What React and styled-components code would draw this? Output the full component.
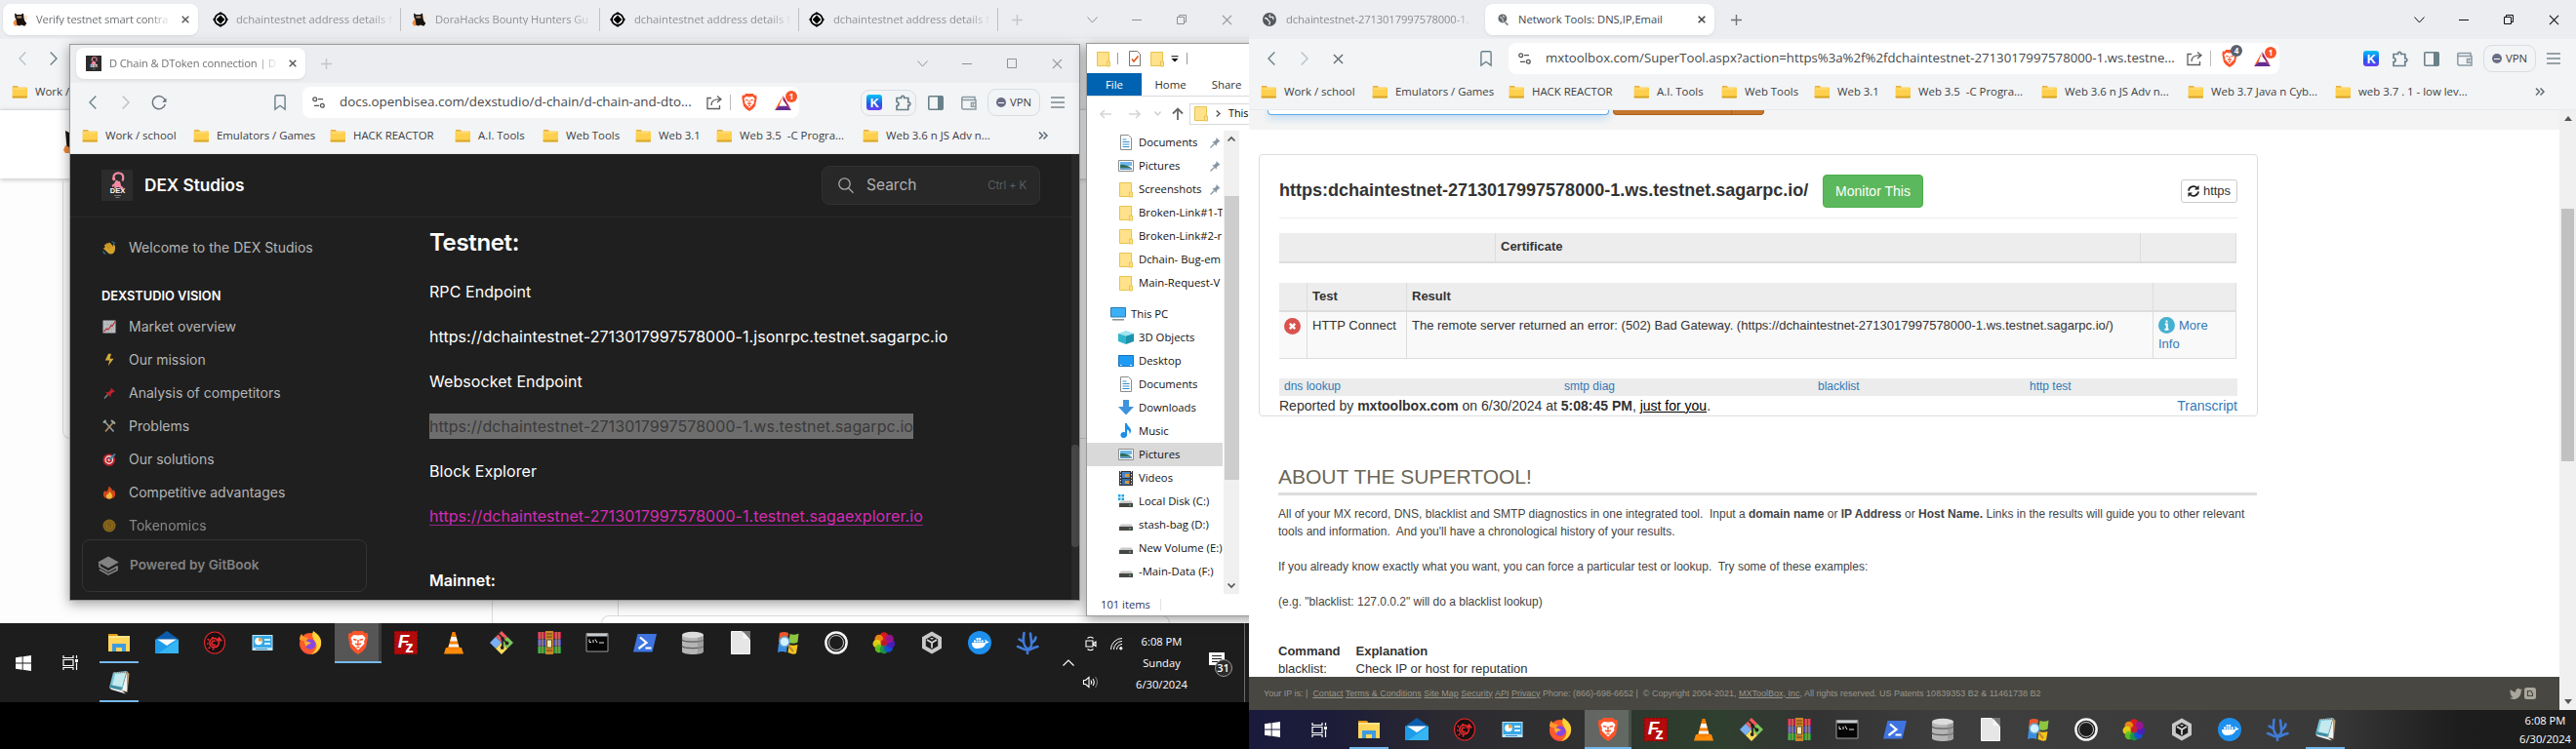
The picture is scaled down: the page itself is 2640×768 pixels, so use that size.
import React from 'react';
import styled, { createGlobalStyle, css } from 'styled-components';

const Global = createGlobalStyle`
  * { box-sizing: border-box; }
  html, body { margin: 0; padding: 0; }
  body { background: #000; }
`;

const ui = '"Open Sans", "Noto Sans", sans-serif';
const arial = '"Liberation Sans", Arial, sans-serif';
const inter = 'Inter, sans-serif';

/* ------------------------------------------------------------------ icons */

const Svg = styled.svg`
  display: block;
  flex: none;
  overflow: visible;
`;

const Icon = ({ w = 16, h, box = 16, boxH, stroke, sw = 1, fill = 'none', children }) => (
  <Svg
    width={w}
    height={h || w}
    viewBox={`0 0 ${box} ${boxH || box}`}
    fill={fill}
    stroke={stroke}
    strokeWidth={sw}
  >
    {children}
  </Svg>
);

const BookmarkFolder = () => (
  <Icon>
    <path d="M1 2.2h5l1.2 1.6H1z" fill="#e09a10" />
    <path d="M1 3.6h14a1 1 0 0 1 1 1v8.8a1 1 0 0 1-1 1H1.6a1 1 0 0 1-1-1V3.6z" fill="#ffd04d" />
    <path d="M.6 12.6v.8a1 1 0 0 0 1 1H15a1 1 0 0 0 1-1v-.8z" fill="#d8a62c" />
    <path d="M2 5h12" stroke="#ffe28a" />
  </Icon>
);

const WinFolder = () => (
  <Icon w={14} h={17} box={14} boxH={17}>
    <path d="M.5 1.5h12v14H.5z" fill="#ffe28b" stroke="#e8c34f" />
    <path d="M10.5 11h3v5h-3z" fill="#ffe28b" stroke="#e8c34f" />
  </Icon>
);

const Fox = () => (
  <Icon>
    <path d="M2 8.5 5 8l1 6-4 .5-1.5-3z" fill="#f08a3c" />
    <path d="M12 3.5h3v5h-3z" fill="#fbe3cf" />
    <path d="M2 1.5 4.5 3h4L11 1.5l.5 5 .6 2.5 2.2 3-2 2.8L9 13.5l-2 1-2.5-.8L3.6 8 2.4 6z" fill="#16120f" />
    <path d="M4.4 4.6h4.8v1.8H4.4z" fill="#f2c9a4" />
    <path d="M5.4 5.4h.8m1.4 0h.8" stroke="#222" />
  </Icon>
);

const Diamond = () => (
  <Icon>
    <path d="M8 0l2.6 2.4H5.4zM8 16l-2.6-2.4h5.2zM0 8l2.4-2.6v5.2zM16 8l-2.4 2.6V5.4z" fill="#000" />
    <circle cx="8" cy="8" r="5.9" fill="#fff" stroke="#000" strokeWidth="1.7" />
    <path d="M8 3.6 12.4 8 8 12.4 3.6 8z" fill="#000" />
  </Icon>
);

const DexMark = ({ size = 16 }) => (
  <Icon w={size} box={32}>
    <path d="M0 0h32v32H0z" fill="#2c2c2c" />
    <path d="M13.5 11c-3-6 1.5-8 5-7.5 4 .6 4.5 4.5 3 8M14 9l-3 .5M16 11c-1 3-3 5-5 6M17 12l1 5 4 2M17 12l-3 7" stroke="#f48ba3" strokeWidth="2.2" fill="none" />
    <path d="M14 12h5l1.5 6h-7z" fill="#f48ba3" />
    <text x="16.5" y="24" textAnchor="middle" fontFamily="Liberation Sans" fontWeight="700" fontSize="7.5" fill="#fff">DEX</text>
    <path d="M13 26.5h7M14.5 28.5h4" stroke="#777" />
  </Icon>
);

const Globe = ({ size = 14 }) => (
  <Icon w={size} box={14}>
    <circle cx="7" cy="7" r="7" fill="#55595e" />
    <path d="M2 5.5c2 0 3 .5 3.5 2 .4 1.2 2 .8 2 2.500l-1 2.5M8 2C6 3 7 5 9 4.500s2.500 1 1.500 2.500" stroke="#eceef0" strokeWidth="1.3" />
  </Icon>
);

const Close = ({ size = 8, color = '#5b5b5b', sw = 1.5 }) => (
  <Icon w={size} box={8} stroke={color} sw={sw}><path d="M.7.7l6.6 6.6M7.3.7.7 7.3" /></Icon>
);
const Plus = ({ color }) => (
  <Icon w={11} box={11} stroke={color} sw={1.4}><path d="M5.5 0v11M0 5.5h11" /></Icon>
);
const Chevron = ({ dir, color }) => (
  <Icon w={8} h={14} box={8} boxH={14} stroke={color} sw={1.4}>
    <path d={dir === 'l' ? 'M7.3.5 1 7l6.3 6.5' : 'M.7.5 7 7 .7 13.5'} />
  </Icon>
);
const Reload = () => (
  <Icon stroke="#69727b" sw={1.4}>
    <path d="M14.2 6A6.6 6.6 0 1 0 14.3 10" />
    <path d="M15.500 3.500v4.300h-4.300z" fill="#69727b" stroke="none" />
  </Icon>
);
const Bookmark = () => (
  <Icon w={12} h={16} box={12} boxH={16} stroke="#69808a" sw={1.4}>
    <path d="M.9 2.500Q.9.8 2.500.8h7q1.600 0 1.600 1.700v12.600L6 11.300.9 15.100z" />
  </Icon>
);
const Tune = () => (
  <Icon w={13} h={12} box={13} boxH={12} stroke="#555" sw={1.3}>
    <circle cx="2.7" cy="2.7" r="1.9" /><path d="M6 2.7h5M2 9.3h5" />
    <circle cx="10.3" cy="9.3" r="1.9" />
  </Icon>
);
const Share = () => (
  <Icon stroke="#5f5f5f" sw={1.3}>
    <path d="M5 3.5H1v11h12.5V11M5 11c0-5 3-6.300 9-6.300M11 1.500l4 3.200-4 3.300" />
  </Icon>
);
const BraveMark = ({ size = 18 }) => (
  <Icon w={size} box={24}>
    <path d="M7 0h10l2 2.200 2.500-.3L22.200 6 20 17l-3.500 4L12 24l-4.500-3L4 17 1.800 6l.7-4.100 2.500.3z" fill="#fb542b" />
    <path d="M12 4.500 16.500 4l3 3-1.500 4 .5 2-3.500 3.500L12 19.500 9 16.500 5.500 13l.5-2-1.500-4 3-3z" fill="#fff" />
    <path d="M7 8.500l3.500.8M17 8.500l-3.500.8M9 13l3 1.200 3-1.200M12 9v5M10.500 16.500h3" stroke="#fb542b" strokeWidth="1.4" fill="none" />
  </Icon>
);
const Bat = () => (
  <Icon w={17} h={15} box={17} boxH={15}>
    <path d="M8.500 0 4.500 10.500 0 15z" fill="#ff5000" />
    <path d="M0 15h17l-4.500-4.500H4.500z" fill="#662d91" />
    <path d="M8.500 0 17 15l-4.500-4.500L8.500 5z" fill="#9e1f63" />
    <path d="M8.500 5 12.500 10.500h-8z" fill="#fff" />
  </Icon>
);
const KExt = () => (
  <Icon>
    <defs><linearGradient id="kext" x1="0" y1="0" x2="0" y2="1"><stop stopColor="#06c5f5" /><stop offset=".6" stopColor="#2059e8" /><stop offset="1" stopColor="#6d3df2" /></linearGradient></defs>
    <rect width="16" height="16" rx="3" fill="url(#kext)" />
    <text x="8.2" y="12.5" textAnchor="middle" fontFamily="Liberation Sans" fontWeight="700" fontSize="12.5" fill="#fff">K</text>
  </Icon>
);
const Puzzle = () => (
  <Icon w={17} box={17} stroke="#69808a" sw={1.7}>
    <path d="M2 3.500h4.500a1.700 1.700 0 1 1 3.300 0h4v4.300a1.700 1.700 0 1 1 0 3.300V15.500H2V11.500a2 2 0 1 0 0-4z" />
  </Icon>
);
const SidePanel = () => (
  <Icon w={16} h={15} box={16} boxH={15}><rect x=".8" y=".8" width="14.4" height="13.4" rx="1" stroke="#69808a" strokeWidth="1.6" /><path d="M10 1h5v13h-5z" fill="#69808a" /></Icon>
);
const Wallet = () => (
  <Icon w={16} h={15} box={16} boxH={15} stroke="#8b9aa2" sw={1.5}>
    <path d="M14 4V1.500H2.200a1.500 1.500 0 0 0 0 3H15V14H2.500Q.8 14 .8 12.300V3M15 7.500h-4.500v3.700H15M12 9.300h1" />
  </Icon>
);
const Burger = () => (
  <Icon w={14} h={12} box={14} boxH={12} stroke="#7a868d" sw={1.5}><path d="M0 1h14M0 6h14M0 11h14" /></Icon>
);
const More = () => (
  <Icon w={10} h={8} box={10} boxH={8} stroke="#5f6b73" sw={1.5}><path d="M1 .5 4.500 4 1 7.500M5.500.5 9 4 5.500 7.500" /></Icon>
);
const WinDown = ({ c }) => <Icon w={11} h={7} box={11} boxH={7} stroke={c}><path d="M.5.5l5 5.500 5-5.500" /></Icon>;
const WinMin = ({ c }) => <Icon w={10} h={2} box={10} boxH={2} stroke={c}><path d="M0 1.500h10" /></Icon>;
const WinMax = ({ c, restore }) => (
  <Icon w={10} box={10} stroke={c}>
    {restore ? <path d="M.5 2.500h7v7h-7zM2.500 2.500v-2h7v7h-2" /> : <path d="M.5.5h9v9h-9z" />}
  </Icon>
);

/* taskbar glyphs, all on a 24 unit box */
const T = ({ children, w = 24, ...p }) => <Icon w={w} box={24} {...p}>{children}</Icon>;
const taskIcons = {
  explorer: <T><path d="M1 3h9l2 3H1z" fill="#e39b12" /><path d="M1 5h22v16H1z" fill="#ffd55a" /><path d="M5 13h14v8h-4v-4H9v4H5z" fill="#3f9be0" /><path d="M1 5h22v2H1z" fill="#ffe488" /></T>,
  mail: <T><path d="M0 8.500 12 0l12 8.500z" fill="#0b5cab" /><path d="M0 8.500h24V23H0z" fill="#1e9be9" /><path d="M24 8.500V23H3z" fill="#3fc0f5" opacity=".7" /><path d="M2 8.500h20L12 15z" fill="#f5f9fd" /></T>,
  gear: <T><ellipse cx="12" cy="12" rx="10.500" ry="11" stroke="#e0262c" strokeWidth="1.1" fill="#1a1010" /><path d="M14.500 8.800A4.600 4.600 0 1 0 15 15M12.500 10.500a2.200 2.200 0 1 0 .2 3.500" stroke="#ee2a30" strokeWidth="1.5" /><path d="M6 9.500 4.700 8.200M5.500 13H4M7 16.500 5.800 18M10.500 17.500V19.500M10 8V6" stroke="#ee2a30" strokeWidth="1.7" /><path d="M13 16.500c3-1 3.500-3 3.500-8M14 10.500 16.600 7l2.600 3.500" stroke="#ee2a30" strokeWidth="1.6" /></T>,
  panel: <T><path d="M1.500 4h21v16h-21z" fill="#bfe6fb" /><path d="M2.500 5h19v12h-19z" fill="#37a8e5" /><circle cx="8" cy="10.500" r="3.800" fill="#fff" /><path d="M8 10.500V6.700a3.800 3.800 0 0 1 3.800 3.800z" fill="#f0a13c" /><path d="M14 8h6v2h-6zm0 4h6v2h-6z" fill="#d6f0ff" /><path d="M5 18.500h12" stroke="#3689be" /></T>,
  firefox: <T><circle cx="12" cy="13" r="11" fill="#ff5a2a" /><path d="M15 0c6 4 9 8 8 14-1 5-5 9-10 10 5-4 7-9 4-13-2-3-4-6-2-11z" fill="#ffd43a" /><path d="M1 9c0-3 1-5 2-6l2 3 5 1-3 4z" fill="#ff9a2b" /><circle cx="12" cy="13.500" r="5.300" fill="#8b46e0" /><path d="M6 11c2-1 5 0 7 2-3 0-4 1-5 3-1-1-2-3-2-5z" fill="#ffb02e" /><path d="M2 14c1 6 6 9 11 9-4 .8-9-1-11-9z" fill="#f4287f" /></T>,
  brave: <BraveMark size={24} />,
  filezilla: <T><path d="M0 0h24v24H0z" fill="#b30b0b" /><path d="M.5.500h23v23H.5z" stroke="#7c0505" strokeDasharray="2 2" /><text x="9.500" y="17" textAnchor="middle" fontFamily="Liberation Sans" fontWeight="700" fontStyle="italic" fontSize="19" fill="#fff">F</text><text x="15.500" y="22" textAnchor="middle" fontFamily="Liberation Sans" fontWeight="700" fontSize="17" fill="#fff">z</text></T>,
  vlc: <T><path d="M4 17h16l2 6.500H2z" fill="#ff8c0a" /><path d="M10.500 1h3L18 18q-6 3.500-12 0z" fill="#f57e00" /><path d="M9.500 6h5l1.300 4.500H8.200zM7.400 13.500h9.200l.8 3H6.600z" fill="#f5f5f5" /></T>,
  git: <T><path d="m12 0 6 6-6 6-6-6z" fill="#f05a5a" /><path d="m6 6 6 6-6 6-6-6z" fill="#7ab0f5" /><path d="m18 6 6 6-6 6-6-6z" fill="#7cc75a" /><path d="m12 12 6 6-6 6-6-6z" fill="#f7dc5c" /><path d="M9 3l4 4v10M13 8l4 4" stroke="#222" strokeWidth="1.7" /><circle cx="13" cy="8" r="1.9" fill="#222" /><circle cx="12.700" cy="17" r="1.9" fill="#222" /><circle cx="17.500" cy="12.500" r="1.9" fill="#222" /></T>,
  rar: <T><path d="M0 1h24v7H0z" fill="#b81d4e" /><path d="M0 8.500h24v7H0z" fill="#4a4ab0" /><path d="M0 16h24v7H0z" fill="#1f8a3b" /><path d="M2 1v22M22 1v22M5 1v22M19 1v22" stroke="#e5c24a" strokeWidth="1" opacity=".75" /><path d="M8 0h8v24H8z" fill="#c9852a" /><path d="M9.500 9h5v8h-5z" fill="#f3e4b8" stroke="#553" /><path d="M9 3h6M9 6h6M9 20h6" stroke="#6b3f10" /></T>,
  cmd: <T><path d="M1 2.500h22v18.500H1z" fill="#050505" stroke="#9b9b9b" /><path d="M1.500 3h21v2.500h-21z" fill="#c8ccd0" /><path d="M4 8.500v3h2M8 9v3M10 8.500l2 3.500M14 12h5" stroke="#e8e8e8" /></T>,
  powershell: <T><path d="M4.500 3H24l-4.500 18.500H0z" fill="#3f74e0" /><path d="m7 6.500 6.500 5.500-8 6M12.500 17.500h6" stroke="#fff" strokeWidth="2.2" /></T>,
  database: <T><path d="M1 4v17c0 4 22 4 22 0V4z" fill="#b5b5b5" /><path d="M1 8.500c0 3.500 22 3.500 22 0M1 15c0 3.500 22 3.500 22 0" stroke="#5e5e5e" strokeWidth="1.3" /><ellipse cx="12" cy="4" rx="11" ry="3.3" fill="#dcdcdc" /><path d="M17 7v16l6-2V5z" fill="#8a8a8a" opacity=".5" /></T>,
  doc: <T><path d="M2.500.5h12l7 8v15h-19z" fill="#e6e6e6" stroke="#f8f8f8" /><path d="M13 0h9v9z" fill="#777" /><path d="M14.500.5v7.500h6.500z" fill="#f6f6f6" /></T>,
  winlens: <T><path d="M3 2c3-1.500 6-1.500 9 0l-1 9c-3-1.500-6-1.500-9 0z" fill="#e8562c" /><path d="M13.500 3c3 1 6 1 9-.5l-1 9c-3 1.500-6 1.500-9 .5z" fill="#8cc63f" /><path d="M2 13c3-1.500 6-1.500 9 0l-1 9c-3-1.500-6-1.500-9 0z" fill="#3b8de0" /><path d="M12.500 14c3 1 6 1 9 0l-1.500 9c-3 1.500-6 0-8.500-1z" fill="#f5c419" /><circle cx="8" cy="11" r="5" fill="#d4efff" stroke="#5fa8d8" strokeWidth="1.5" /><path d="m12 15 5 6" stroke="#b98a3a" strokeWidth="2" /></T>,
  ring: <T><circle cx="12" cy="12" r="10.600" stroke="#f4f4f4" strokeWidth="2.5" fill="#1d1d1d" /><path d="M8 6.500A7.500 7.500 0 0 0 17.500 16 7.500 7.500 0 0 1 8 6.500z" fill="#aaa" /><circle cx="12" cy="12" r="7.500" stroke="#ddd" strokeWidth=".9" fill="none" /></T>,
  colors: <T>{[['#e01b1b', 12, 5.5], ['#f08a12', 6.8, 8], ['#e6d415', 4.8, 13], ['#5fc41e', 7, 18], ['#19934a', 12, 19], ['#1450d8', 16.5, 17.5], ['#4a1fc0', 19, 13], ['#9c1490', 17.5, 8]].map(([c, x, y]) => <circle key={c} cx={x} cy={y} r="4.3" fill={c} opacity=".95" />)}<circle cx="12" cy="12" r="3.500" fill="#e01b2b" opacity=".8" /></T>,
  unity: <T><path d="m12 .5 10 5.700v11.600L12 23.500 2 17.800V6.200z" fill="#c9c9c9" /><path d="m12 5 6.200 3.500v7L12 19l-6.200-3.500v-7z" fill="#1d1d1d" /><path d="m12 12 5-3m-5 3v5.500M12 12 7 9" stroke="#d9d9d9" strokeWidth="1.7" /><path d="M10 7h4l-2 2z" fill="#c9c9c9" /></T>,
  docker: <T><circle cx="12" cy="12" r="12" fill="#1d90ee" /><path d="M4 12h13.500c.5-1.500.2-2.500-.3-3.300 1.300.2 2 1 2.300 2 .8-.1 1.700 0 2 .4-.7 1.300-2 1.500-3 1.500C17 16.500 14 18 10 18c-4 0-6-2-6-6z" fill="#fff" /><path d="M6 9.500h2v2H6zm2.600 0h2v2h-2zm2.600 0h2v2h-2zm2.600 0h2v2h-2zM8.600 7h2v2h-2zm2.600 0h2v2h-2z" fill="#fff" /></T>,
  coral: <T stroke="#3f7bd8" sw={2.6}><path d="M12 23v-4M12 19.500c-4.500 0-5.500-2.500-10-3.500M12 19.500c4 0 5-2.500 10.500-3.500M12 19c4-2 4.500-4 4-8L15 2.500M16.500 12c2-1 3.500-2.500 4-5.500M11.500 18C7.500 15 7 10 8.500 2M7.500 11 3.500 8.500" strokeLinecap="round" strokeLinejoin="round" /></T>,
  notepad: <T><path d="M6 1.500 20 0l-5 20L2 17z" fill="#79c4d6" /><path d="M8 3 19 2l-4 14-10-1z" fill="#c4e9ef" /><path d="m3 14 12 3-1 3-12-3z" fill="#3f8fa3" /><path d="m20 0 2.500 3-2 19-5.500-2z" fill="#b99a6b" /><path d="m2 17 13 3 4 3.500L4 19z" fill="#f1f1f1" /><path d="M20 2v19l-5-1z" fill="#eef3f4" /><path d="M7 1.500h13" stroke="#888" strokeDasharray="1 1" /></T>,
};
const taskOrder = Object.keys(taskIcons);

const WinLogo = () => (
  <Icon w={16} box={16} fill="#fff"><path d="M0 2.200 6.700 1.300v6.200H0zM7.600 1.200 16 0v7.500H7.600zM0 8.400h6.700v6.300L0 13.800zM7.600 8.400H16V16l-8.400-1.200z" /></Icon>
);
const TaskView = () => (
  <Icon w={17} box={17} stroke="#fff" sw={1.2}>
    <path d="M1 1v2.500h10V1M1 16v-2.500h10V16M1 5.500h10v6H1zM14.500 1v3M14.500 8.500V16" /><path d="M13 5h3v3h-3z" fill="#fff" stroke="none" />
  </Icon>
);

/* --------------------------------------------------------- browser chrome */

const Spacer = styled.div`flex: none; width: ${p => p.$w}px;`;
const Grow = styled.div`flex: 1;`;

const Monitor = styled.section`
  position: relative;
  flex: none;
  display: flex;
  flex-direction: column;
  width: ${p => p.$w}px;
  height: 768px;
  overflow: hidden;
  background: ${p => p.$bg};
`;
const Desk = styled.div`display: flex; width: 2640px; height: 768px; overflow: hidden;`;
const BackArea = styled.div`
  flex: none;
  display: flex;
  flex-direction: column;
  height: 639px;
  overflow: hidden;
`;

const TabStrip = styled.div`
  flex: none;
  display: flex;
  align-items: flex-start;
  height: ${p => p.$h}px;
  padding-top: ${p => p.$h - 36}px;
  background: #ebedf0;
  font: 11.2px/1.2 ${ui};
`;
const Tab = styled.div`
  flex: none;
  display: flex;
  align-items: center;
  width: ${p => p.$w}px;
  height: 32px;
  padding: 0 9px 0 ${p => p.$pad ?? 10}px;
  border-radius: 8px;
  color: ${p => p.$color || '#8f9194'};
  ${p => p.$active && css`background: #fff; box-shadow: 0 1px 3px rgba(0, 0, 0, .08);`}
`;
const TabTitle = styled.span`
  flex: 1;
  min-width: 0;
  margin: 0 ${p => p.$end ?? 12}px 1px ${p => p.$gap ?? 10}px;
  white-space: nowrap;
  ${p => p.$tight && css`letter-spacing: -${p.$tight}px;`}
  ${p => p.$fade && css`mask-image: linear-gradient(90deg, #000 calc(100% - 22px), rgba(0, 0, 0, .08));`}
`;
const TabRule = styled.div`flex: none; width: 1px; height: 24px; margin: 4px 0; background: #bfc1c4;`;
const StripSlot = styled.div`
  flex: none;
  display: flex;
  align-items: center;
  justify-content: center;
  width: ${p => p.$w || 46}px;
  height: 32px;
`;

const WindowButtons = ({ color, restore }) => (
  <>
    <StripSlot><WinDown c={color} /></StripSlot>
    <StripSlot><WinMin c={color} /></StripSlot>
    <StripSlot><WinMax c={color} restore={restore} /></StripSlot>
    <StripSlot><Close size={11} color={color} sw={0.8} /></StripSlot>
  </>
);

const Toolbar = styled.div`
  flex: none;
  display: flex;
  align-items: center;
  height: 40px;
  background: #f3f4f6;
`;
const UrlBox = styled.div`
  flex: none;
  display: flex;
  align-items: center;
  width: ${p => p.$w}px;
  height: 32px;
  padding-left: ${p => p.$pad}px;
  background: #fff;
  border-radius: 8px;
`;
const UrlText = styled.span`
  flex: none;
  width: ${p => p.$w}px;
  margin: 0 ${p => p.$after}px 1px ${p => p.$before}px;
  overflow: hidden;
  white-space: nowrap;
  font: ${p => p.$size}px/1.3 ${ui};
  color: #46484b;
`;
const UrlRule = styled.div`width: 1px; height: 16px; margin: 0 10px 0 8px; background: #bbb;`;
const Badged = styled.div`position: relative; flex: none; margin-right: ${p => p.$mr || 0}px;`;
const Badge = styled.span`
  position: absolute;
  right: ${p => p.$right}px;
  top: -5px;
  width: 12px;
  height: 12px;
  border-radius: 6px;
  background: ${p => p.$bg};
  color: #fff;
  font: 700 8px/12px ${ui};
  text-align: center;
`;
const ExtPill = styled.div`
  display: flex;
  align-items: center;
  justify-content: space-between;
  width: ${p => p.$w}px;
  height: 27px;
  padding: 0 4px 0 5px;
  border: 1px solid ${p => p.$plain ? 'transparent' : '#d7dde1'};
  border-radius: 9px;
`;
const VpnPill = styled.div`
  display: flex;
  align-items: center;
  justify-content: center;
  gap: 4px;
  width: 54px;
  height: 28px;
  border: 1px solid #d7dde1;
  border-radius: 9px;
  font: 11.4px/1 ${ui};
  color: #3d4147;
`;
const VpnDot = styled.i`
  display: flex;
  align-items: center;
  width: 10px;
  height: 10px;
  padding: 0 2px;
  border-radius: 5px;
  background: #6b6c86;
  &::before { content: ''; width: 6px; height: 1px; background: #fff; }
`;

const BookmarkBar = styled.div`
  flex: none;
  display: flex;
  align-items: center;
  height: 33px;
  padding: 0 0 4px 12px;
  background: #f3f4f6;
  border-bottom: 1px solid #e7e9ed;
  font: 11.4px/1.2 ${ui};
  color: #3c3f43;
`;
const BookmarkItem = styled.div`
  flex: none;
  display: flex;
  align-items: center;
  gap: 8px;
  width: ${p => p.$w}px;
  white-space: pre;
`;

const bookmarkData = [
  ['Work / school', 114], ['Emulators / Games', 140], ['HACK REACTOR', 128], ['A.I. Tools', 90],
  ['Web Tools', 95], ['Web 3.1', 83], ['Web 3.5  -C Progra...', 150], ['Web 3.6 n JS Adv n...', 150],
  ['Web 3.7 Java n Cyb...', 151], ['web 3.7 . 1 - low lev...', 150],
];
const Bookmarks = ({ count, gap }) => (
  <BookmarkBar>
    {bookmarkData.slice(0, count).map(([name, w]) => (
      <BookmarkItem key={name} $w={w}><BookmarkFolder />{name}</BookmarkItem>
    ))}
    {gap ? <><Spacer $w={gap} /><More /></> : null}
  </BookmarkBar>
);

const Extensions = ({ plain }) => (
  <>
    <ExtPill $plain={plain} $w={57}><KExt /><Puzzle /></ExtPill>
    <Spacer $w={plain ? 11 : 12} /><SidePanel />
    <Spacer $w={18} /><Wallet />
    <Spacer $w={11} /><VpnPill><VpnDot />VPN</VpnPill>
    <Spacer $w={11} /><Burger />
  </>
);

const FloatingWindow = styled.div`
  position: absolute;
  left: ${p => p.$x}px;
  top: ${p => p.$y}px;
  width: ${p => p.$w}px;
  height: ${p => p.$h}px;
  display: flex;
  flex-direction: column;
  overflow: hidden;
  border: 1px solid #9a9a9a;
  background: ${p => p.$bg || '#fff'};
  box-shadow: 0 3px 12px rgba(0, 0, 0, .38);
`;

/* ------------------------------------------------ background browser page */

const BackPage = styled.div`flex: 1; min-height: 0; display: flex; flex-direction: column; background: #fdfdfd;`;
const BackHeader = styled.div`
  flex: none;
  height: 70px;
  padding: 21px 0 0 65px;
  background: #fff;
  box-shadow: 0 1px 5px rgba(0, 0, 0, .25);
`;
const BackCard = styled.div`
  flex: none;
  height: 267px;
  margin: 0 0 0 64px;
  border: solid #dcdcdc;
  border-width: 0 0 1px 1px;
  border-radius: 0 0 0 8px;
`;
const BackColumns = styled.div`flex: 1; display: flex; align-items: stretch;`;
const BackColumn = styled.div`
  display: flex;
  align-items: flex-end;
  width: ${p => p.$w}px;
  border-right: 1px solid #dcdcdc;
`;
const BackSheet = styled.div`
  align-self: flex-end;
  width: 583px;
  height: 8px;
  margin-left: -18px;
  border: 1px solid #dcdcdc;
  border-bottom: 0;
  border-radius: 8px 8px 0 0;
  background: #fff;
`;

const BackBrowser = () => (
  <>
    <TabStrip $h={40}>
      <Spacer $w={3} />
      <Tab $w={200} $active $color="#6f7174"><Fox /><TabTitle $fade $gap={8} $tight={0.15}>Verify testnet smart contra</TabTitle><Close /></Tab>
      <Spacer $w={5} />
      <Tab $w={202}><Diamond /><TabTitle $fade $gap={8} $end={-1}>dchaintestnet address details f</TabTitle></Tab>
      <TabRule />
      <Tab $w={203} $pad={11}><Fox /><TabTitle $fade $gap={8} $end={-1} $tight={0.1}>DoraHacks Bounty Hunters Gu</TabTitle></Tab>
      <TabRule />
      <Tab $w={203}><Diamond /><TabTitle $fade $gap={9} $end={-1}>dchaintestnet address details f</TabTitle></Tab>
      <TabRule />
      <Tab $w={203}><Diamond /><TabTitle $fade $gap={9} $end={-1}>dchaintestnet address details f</TabTitle></Tab>
      <TabRule />
      <StripSlot $w={38}><Plus color="#c3c5c8" /></StripSlot>
      <Grow />
      <WindowButtons color="#8f9194" restore />
    </TabStrip>
    <Toolbar>
      <Spacer $w={19} /><Chevron dir="l" color="#b9c2c7" />
      <Spacer $w={24} /><Chevron dir="r" color="#69808a" />
    </Toolbar>
    <Bookmarks count={1} />
    <BackPage>
      <BackHeader><Icon w={16} h={24} box={16} boxH={24}><path d="M2 0 8 3v20H4z" fill="#16120f" /><path d="M2 15 8 18v5H2l-2-3z" fill="#f08a3c" /></Icon></BackHeader>
      <BackCard />
      <BackColumns>
        <BackColumn $w={505} />
        <BackColumn $w={129} />
        <BackSheet />
      </BackColumns>
    </BackPage>
  </>
);

/* ----------------------------------------------------------- docs window */

const DocsPage = styled.div`
  flex: 1;
  display: flex;
  min-height: 0;
  background: #1f1f1f;
  color: #fff;
  font-family: ${inter};
`;
const DocsBody = styled.div`flex: 1; display: flex; flex-direction: column; min-width: 0; overflow: hidden;`;
const DarkTrack = styled.div`flex: none; width: 8px; padding-top: 298px; background: #2a2a2a;`;
const DarkThumb = styled.div`height: 105px; border-radius: 4px; background: #474747;`;
const DocsHeader = styled.header`
  flex: none;
  display: flex;
  align-items: center;
  height: 65px;
  padding: 0 32px;
  border-bottom: 1px solid #2b2b2b;
`;
const DocsName = styled.h1`flex: 1; margin: 0 0 0 12px; font: 600 17.2px/1.3 ${inter};`;
const SearchBox = styled.div`
  display: flex;
  align-items: center;
  width: 224px;
  height: 40px;
  padding: 0 13px 0 16px;
  border: 1px solid #313131;
  border-radius: 8px;
  background: #282828;
`;
const SearchLabel = styled.span`flex: 1; margin-left: 13px; font: 15.5px/1.3 ${inter}; color: #b0b0b0;`;
const SearchKeys = styled.span`font: 11.5px/1.3 ${inter}; letter-spacing: -.2px; color: #5d5d5d;`;
const DocsColumns = styled.div`flex: 1; display: flex; min-height: 0;`;
const Sidebar = styled.nav`flex: none; width: 368px; padding: 14px 0 0 32px;`;
const SideLink = styled.div`
  display: flex;
  align-items: center;
  gap: 13px;
  height: 34px;
  padding-left: 1px;
  font: 14px/1.3 ${inter};
  color: #b5b5b5;
  opacity: ${p => p.$faded ? 0.7 : 1};
`;
const SideTitle = styled.div`
  height: 29px;
  margin-top: 18px;
  font: 600 12.8px/29px ${inter};
`;
const GitBook = styled.div`
  display: flex;
  align-items: center;
  gap: 12px;
  width: 292px;
  height: 54px;
  margin: -3px 0 0 -20px;
  padding-left: 16px;
  border: 1px solid #333;
  border-radius: 8px;
  font: 600 13.6px/1 ${inter};
  color: #828282;
`;
const Article = styled.article`flex: 1; font: 16px/26px ${inter};`;
const ArticleTitle = styled.h2`margin: 0; height: 53px; font: 600 24px/51px ${inter}; letter-spacing: -.35px;`;
const Line = styled.div`
  display: flex;
  align-items: center;
  height: ${p => p.$h || 46}px;
  font-weight: ${p => p.$bold ? 600 : 400};
  letter-spacing: ${p => p.$bold ? 0 : 0.065}px;
`;
const Selected = styled.span`height: 26px; background: #6d6d6d; color: #3a3a3a;`;
const PinkLink = styled.a`
  color: #d42bb4;
  text-decoration: underline;
  text-decoration-color: #93258a;
  text-decoration-thickness: 1px;
  text-underline-offset: 3px;
`;

const E = ({ children }) => <Icon w={14} box={14}>{children}</Icon>;
const sideIcons = {
  wave: <E><path d="M2.500 5.500C1.500 4 3 3 4 4c-.5-1.700 1-2.300 2-1 0-1.500 1.500-1.700 2.500-.2L11 6l-.2-2.500c1.700-.3 2 1 2.200 3.500.2 3-1 6-4 6.500-2 .2-3.500-1-4.500-2.500L1.500 8.500c-1-1.500.5-2 1-1z" fill="#d4a22c" /><path d="M4 4.500 7 8.500M6 3.300l2.700 4" stroke="#a97815" strokeWidth=".8" /><path d="M9.500.8q2.500.2 3.300 2.200M.7 10.500q.5 2.200 2.500 2.800" stroke="#2c6f84" strokeWidth="1.3" /></E>,
  chart: <E><path d="M.5.500h13v13H.5z" fill="#b9bcc0" /><path d="M.5 4.500h13M.5 9h13M5 .500v13M9.500.500v13" stroke="#a2a6ab" strokeWidth=".5" /><path d="m1.500 12 3-3 1.500 1 3-4.500 1 1L13 1.500" stroke="#b5353a" strokeWidth="1.2" /></E>,
  bolt: <E><path d="M6 .8 2.800 7.600h4.400L5.800 13.200 11.500 5.800H7.600L9 .8z" fill="#d3ab3a" /></E>,
  pin: <E><path d="m8.500 1.500 4.500 4-2 .5-2.500 2.500.2 3L3 6l3 .2L8.500 4z" fill="#c2202a" /><path d="m5.500 8.500-3.500 4" stroke="#8d8d8d" strokeWidth="1.2" /></E>,
  tools: <E><path d="M2 2l9.500 10.500" stroke="#8e9aa0" strokeWidth="1.7" /><path d="M12 2 3 12.500" stroke="#b18a5c" strokeWidth="1.7" /><path d="M9 1l4 3.500M1 3.500 3.500 1" stroke="#9aa" strokeWidth="2" /></E>,
  target: <E><circle cx="6.800" cy="7.500" r="6.3" fill="#c11e26" /><circle cx="6.800" cy="7.500" r="3.700" stroke="#ddd" strokeWidth="1.4" fill="#c11e26" /><circle cx="6.800" cy="7.500" r="1.2" fill="#eee" /><path d="M7 7.300 13 1.500" stroke="#3a86a8" strokeWidth="1.8" /></E>,
  fire: <E><path d="M6.500.5c3 2 3.500 3.500 3.500 5l1.500-1.500c1.500 2.500 2 4 1.500 6-.7 2.500-3 3.500-6 3.500S1.500 12.500 1 10c-.4-2 .3-3.500 1.500-5L4 6.500C5 5 6.500 3 6.500.5z" fill="#d4481a" /><path d="M7.500 6c1.500 1.500 2.500 3 2.500 4.700 0 2-1.500 2.800-3 2.800s-3-.8-3-2.800C4 9 6.500 8.500 7.500 6z" fill="#eebb3c" /></E>,
  coin: <E><circle cx="7" cy="7" r="6.500" fill="#b98a1e" /><circle cx="7" cy="7" r="4.600" stroke="#94690e" /><path d="M5 9h4M5.500 8V6M7 8V6M8.500 8V6M5 5.500 7 4l2 1.500z" stroke="#94690e" strokeWidth=".8" /></E>,
};
const sideLinks = [
  ['chart', 'Market overview'], ['bolt', 'Our mission'], ['pin', 'Analysis of competitors'],
  ['tools', 'Problems'], ['target', 'Our solutions'], ['fire', 'Competitive advantages'], ['coin', 'Tokenomics'],
];

const DocsWindow = () => (
  <FloatingWindow $x={71} $y={45} $w={1036} $h={571} $bg="#1f1f1f">
    <TabStrip $h={39}>
      <Spacer $w={6} />
      <Tab $w={235} $active $color="#6f7174"><DexMark /><TabTitle $fade $gap={8} $tight={0.15}>D Chain &amp; DToken connection | D</TabTitle><Close /></Tab>
      <StripSlot $w={42}><Plus color="#c3c5c8" /></StripSlot>
      <Grow />
      <WindowButtons color="#8f9194" />
    </TabStrip>
    <Toolbar>
      <Spacer $w={19} /><Chevron dir="l" color="#69808a" />
      <Spacer $w={26} /><Chevron dir="r" color="#b9c2c7" />
      <Spacer $w={22} /><Reload />
      <Spacer $w={110} /><Bookmark />
      <Spacer $w={17} />
      <UrlBox $w={509} $pad={10}>
        <Tune />
        <UrlText $size={13.4} $w={363} $before={15} $after={13}>docs.openbisea.com/dexstudio/d-chain/d-chain-and-dto...</UrlText>
        <Share /><UrlRule />
        <BraveMark />
        <Spacer $w={17} />
        <Badged><Bat /><Badge $right={-6} $bg="#fb542b">1</Badge></Badged>
      </UrlBox>
      <Spacer $w={63} />
      <Extensions />
    </Toolbar>
    <Bookmarks count={8} gap={30} />
    <DocsPage>
      <DocsBody>
        <DocsHeader>
          <DexMark size={32} />
          <DocsName>DEX Studios</DocsName>
          <SearchBox>
            <Icon stroke="#a8a8a8" sw={1.3}><circle cx="6.500" cy="6.500" r="5.700" /><path d="m10.500 10.700 5 5" /></Icon>
            <SearchLabel>Search</SearchLabel>
            <SearchKeys>Ctrl + K</SearchKeys>
          </SearchBox>
        </DocsHeader>
        <DocsColumns>
          <Sidebar>
            <SideLink>{sideIcons.wave}Welcome to the DEX Studios</SideLink>
            <SideTitle>DEXSTUDIO VISION</SideTitle>
            {sideLinks.map(([icon, label]) => (
              <SideLink key={label} $faded={icon === 'coin'}>{sideIcons[icon]}{label}</SideLink>
            ))}
            <GitBook>
              <Icon w={20} h={19} box={20} boxH={19} stroke="#828282" sw={1.7}>
                <path d="M10 .5 19 5.500 10 10.500 1 5.500z" fill="#828282" />
                <path d="M1 6v4l8 4.500q1 .5 2 0L19 10v3.500L10 18l-9-5" strokeLinejoin="round" />
              </Icon>
              Powered by GitBook
            </GitBook>
          </Sidebar>
          <Article>
            <ArticleTitle>Testnet:</ArticleTitle>
            <Line>RPC Endpoint</Line>
            <Line>https://dchaintestnet-2713017997578000-1.jsonrpc.testnet.sagarpc.io</Line>
            <Line>Websocket Endpoint</Line>
            <Line><Selected>https://dchaintestnet-2713017997578000-1.ws.testnet.sagarpc.io</Selected></Line>
            <Line>Block Explorer</Line>
            <Line><PinkLink>https://dchaintestnet-2713017997578000-1.testnet.sagaexplorer.io</PinkLink></Line>
            <Line $h={86} $bold>Mainnet:</Line>
          </Article>
        </DocsColumns>
      </DocsBody>
      <DarkTrack><DarkThumb /></DarkTrack>
    </DocsPage>
  </FloatingWindow>
);

/* ------------------------------------------------------- explorer window */

const QuickBar = styled.div`flex: none; display: flex; align-items: center; height: 30px; padding-left: 10px;`;
const QuickRule = styled.div`width: 1px; height: 12px; background: #9b9b9b;`;
const Ribbon = styled.div`
  flex: none;
  display: flex;
  height: 24px;
  border-bottom: 1px solid #dadbdc;
  font: 11.4px/23px ${ui};
  color: #333;
`;
const RibbonTab = styled.div`
  width: ${p => p.$w}px;
  text-align: center;
  ${p => p.$file && css`background: #0063b1; color: #fff;`}
`;
const NavBar = styled.div`flex: none; display: flex; align-items: center; height: 35px; padding-left: 13px;`;
const AddressBox = styled.div`
  flex: none;
  display: flex;
  align-items: center;
  gap: 8px;
  width: 90px;
  height: 22px;
  margin-left: 6px;
  padding-left: 4px;
  border: 1px solid #d9d9d9;
  font: 10.8px/1 ${ui};
`;
const TreeArea = styled.div`flex: none; display: flex; height: 475px;`;
const Tree = styled.div`width: 139px; overflow: hidden;`;
const TreeRow = styled.div`
  display: flex;
  align-items: center;
  height: 24px;
  margin-top: ${p => p.$top || 0}px;
  padding-left: ${p => p.$root ? 24 : 32}px;
  background: ${p => p.$on ? '#d9d9d9' : 'transparent'};
  font: 11.3px/1 ${ui};
  white-space: nowrap;
  color: #111;
`;
const TreeIcon = styled.span`flex: none; display: flex; justify-content: center; width: 16px; margin-right: 5px;`;
const TreeLabel = styled.span`flex: none; width: ${p => p.$w ? `${p.$w}px` : 'auto'};`;
const LightTrack = styled.div`
  display: flex;
  flex-direction: column;
  align-items: center;
  width: ${p => p.$w}px;
  padding: ${p => p.$pad}px 0;
  background: #f0f0f0;
`;
const LightThumb = styled.div`
  width: ${p => p.$w}px;
  height: ${p => p.$h}px;
  margin-top: ${p => p.$top}px;
  background: ${p => p.$bg};
`;
const StatusBar = styled.div`
  display: flex;
  align-items: center;
  height: 23px;
  padding-left: 14px;
  font: 11.2px/1 ${ui};
  color: #27375f;
`;
const StatusRule = styled.div`width: 1px; height: 12px; margin-left: 10px; background: #e3e3e3;`;

const DocIcon = () => <Icon w={12} h={16} box={12} boxH={16}><path d="M.5.500h8l3 3v12H.5z" fill="#fff" stroke="#8c8c8c" /><path d="M2.500 5h4M2.500 7.500h7M2.500 10h7M2.500 12.500h7" stroke="#2e8fd0" /></Icon>;
const PicIcon = () => <Icon w={16} h={12} box={16} boxH={12}><path d="M.5.500h15v11H.5z" fill="#fff" stroke="#8c8c8c" /><path d="M2 2h12v4H2z" fill="#6fb7ea" /><path d="M2 5q5-1 12 3.500H2z" fill="#2f6f5c" /><path d="M2 8.500h12V10H2z" fill="#4f8fc0" /></Icon>;
const PcIcon = () => <Icon w={16} h={14} box={16} boxH={14}><path d="M.5.500h15v9.500H.5z" fill="#3bb0f7" stroke="#2c7db3" /><path d="M2 12.800h12" stroke="#7f8f99" strokeWidth="1.5" /></Icon>;
const CubeIcon = () => <Icon w={16} box={16}><path d="m0 4 8-3 8 3-8 2.500z" fill="#9fe6f0" /><path d="M0 4l8 2.500V15l-8-3z" fill="#31b5cc" /><path d="M16 4 8 6.500V15l8-3z" fill="#1d93ae" /></Icon>;
const DeskIcon = () => <Icon w={16} h={12} box={16} boxH={12}><path d="M.5.500h15v11H.5z" fill="#1e9bf5" stroke="#1775bd" /><path d="M2 10.500h1.500M12 10.500h2" stroke="#fff" /></Icon>;
const DownIcon = () => <Icon w={16}><path d="M5 0h6v7h5l-8 8.500L0 7h5z" fill="#3d93dc" /></Icon>;
const NoteIcon = () => <Icon w={16}><path d="M7 0h2c0 3 4 4 4 7.500 0 1.500-.5 2.500-1.500 3.500.5-3-1-4-2.500-4.500V12a3.300 3 0 1 1-2-2.700z" fill="#1b8fe8" /></Icon>;
const FilmIcon = () => <Icon w={14} h={15} box={14} boxH={15}><path d="M0 0h14v15H0z" fill="#333" /><path d="M3 1h8v6H3z" fill="#4a86c8" /><path d="M3 8h8v6H3z" fill="#3a6da8" /><path d="M6 3h4v3H6zM6 10h4v3H6z" fill="#d99a3a" /><path d="M1.500 0v15M12.500 0v15" stroke="#ddd" strokeDasharray="1.500 1.500" /></Icon>;
const DriveIcon = ({ win }) => <Icon w={16} h={14} box={16} boxH={14}>{win && <path d="M0 0h2.500v2.500H0zM3.500 0H6v2.500H3.500zM0 3.500h2.500V6H0zM3.500 3.500H6V6H3.500z" fill="#19a5ea" />}<path d="M3 6.500h10.500L15 9H1z" fill="#c8c8c8" /><path d="M1 9h14v4H1z" fill="#454545" /><path d="M11 11h2" stroke="#5fe06a" /></Icon>;
const PushPin = () => <Icon w={11} box={11}><path d="m6.500 0 4 4-1.500.5L7 6.500l-.3 2.200-4.400-4.400L4.500 4l2-2z" fill="#8796a3" /><path d="m4.500 6.500-4 4" stroke="#8796a3" strokeWidth="1.2" /></Icon>;
const ScrollArrow = ({ up }) => <Icon w={8} h={5} box={8} boxH={5} stroke="#555" sw={1.7}><path d={up ? 'M.5 4.500 4 1l3.500 3.500' : 'M.5.5 4 4 7.500.5'} /></Icon>;

const treeRows = [
  { i: <DocIcon />, t: 'Documents', pin: true }, { i: <PicIcon />, t: 'Pictures', pin: true }, { i: <WinFolder />, t: 'Screenshots', pin: true },
  { i: <WinFolder />, t: 'Broken-Link#1-T' }, { i: <WinFolder />, t: 'Broken-Link#2-r' }, { i: <WinFolder />, t: 'Dchain- Bug-em' }, { i: <WinFolder />, t: 'Main-Request-V' },
  { i: <PcIcon />, t: 'This PC', root: true, top: 8 }, { i: <CubeIcon />, t: '3D Objects' }, { i: <DeskIcon />, t: 'Desktop' }, { i: <DocIcon />, t: 'Documents' },
  { i: <DownIcon />, t: 'Downloads' }, { i: <NoteIcon />, t: 'Music' }, { i: <PicIcon />, t: 'Pictures', on: true }, { i: <FilmIcon />, t: 'Videos' },
  { i: <DriveIcon win />, t: 'Local Disk (C:)' }, { i: <DriveIcon />, t: 'stash-bag (D:)' }, { i: <DriveIcon />, t: 'New Volume (E:)' }, { i: <DriveIcon />, t: '-Main-Data (F:)' },
];

const ExplorerWindow = () => (
  <FloatingWindow $x={1113} $y={44} $w={190} $h={588}>
    <QuickBar>
      <WinFolder /><Spacer $w={7} /><QuickRule /><Spacer $w={11} />
      <Icon w={12} h={16} box={12} boxH={16}><path d="M.5.500h8l3 3v12H.5z" fill="#fff" stroke="#777" /><path d="m3 8.500 2 2.500 4.500-5.500" stroke="#e2541e" strokeWidth="1.6" /></Icon>
      <Spacer $w={10} /><WinFolder /><Spacer $w={7} />
      <Icon w={8} h={7} box={8} boxH={7}><path d="M.5.800h7" stroke="#000" /><path d="M.5 3h7L4 6.500z" fill="#000" /></Icon>
      <Spacer $w={8} /><QuickRule />
    </QuickBar>
    <Ribbon><RibbonTab $w={56} $file>File</RibbonTab><RibbonTab $w={59}>Home</RibbonTab><RibbonTab $w={56}>Share</RibbonTab></Ribbon>
    <NavBar>
      <Icon w={12} h={10} box={12} boxH={10} stroke="#d5d5d5" sw={1.6}><path d="M12 5H1M5 1 1 5l4 4" /></Icon><Spacer $w={18} />
      <Icon w={12} h={10} box={12} boxH={10} stroke="#d5d5d5" sw={1.6}><path d="M0 5h11M7 1l4 4-4 4" /></Icon><Spacer $w={14} />
      <Icon w={7} h={5} box={7} boxH={5} stroke="#ccc" sw={1.3}><path d="M.5.5l3 3.500 3-3.500" /></Icon><Spacer $w={11} />
      <Icon w={12} h={13} box={12} boxH={13} stroke="#666" sw={1.8}><path d="M6 13V1.500M1 6.500l5-5 5 5" /></Icon>
      <AddressBox><WinFolder /><Icon w={5} h={7} box={5} boxH={7} stroke="#555" sw={1.4}><path d="M.7.5 4 3.500.7 6.500" /></Icon>This</AddressBox>
    </NavBar>
    <TreeArea>
      <Tree>
        {treeRows.map((r, n) => (
          <TreeRow key={n} $root={r.root} $top={r.top} $on={r.on}>
            <TreeIcon>{r.i}</TreeIcon><TreeLabel $w={r.pin ? 73 : 0}>{r.t}</TreeLabel>{r.pin && <PushPin />}
          </TreeRow>
        ))}
      </Tree>
      <Spacer $w={1} />
      <LightTrack $w={16} $pad={6}>
        <ScrollArrow up /><LightThumb $w={15} $h={291} $top={56} $bg="#cdcdcd" /><Grow /><ScrollArrow />
      </LightTrack>
    </TreeArea>
    <StatusBar>101 items<StatusRule /></StatusBar>
  </FloatingWindow>
);

/* --------------------------------------------------------------- taskbar */

const Taskbar = styled.footer`
  flex: none;
  display: flex;
  height: ${p => p.$h}px;
  background: ${p => p.$bg};
  color: #fff;
  font: 11.2px/1 ${ui};
`;
const StartArea = styled.div`flex: none; display: flex; align-items: center; width: ${p => p.$w}px; padding-left: 16px; gap: 32px;`;
const TaskGrid = styled.div`
  flex: none;
  display: grid;
  grid-template-columns: repeat(${p => p.$cols}, 49px);
  grid-auto-rows: ${p => p.$row}px;
  align-content: start;
`;
const TaskSlot = styled.div`
  display: flex;
  align-items: center;
  justify-content: center;
  ${p => p.$active && css`
    margin-right: 1px;
    background: linear-gradient(90deg, rgba(255, 255, 255, .25) 45px, rgba(255, 255, 255, .13) 45px);
    box-shadow: inset 0 -2px #76b9ed;
  `}
`;
const TaskOpen = styled.div`
  display: flex;
  align-items: center;
  justify-content: center;
  width: 40px;
  height: 100%;
  border: solid #76b9ed;
  border-width: 0 0 2px;
  padding-top: 2px;
`;
const Tray = styled.div`display: flex; align-items: center; flex: none; width: 74px;`;
const TrayGrid = styled.div`
  display: grid;
  grid-template: 40px 40px / 26px 26px;
  place-items: center;
  margin-left: 4px;
`;
const Clock = styled.div`
  flex: none;
  display: flex;
  flex-direction: column;
  align-items: center;
  justify-content: center;
  gap: ${p => p.$gap}px;
  width: ${p => p.$w}px;
`;
const Notice = styled.div`position: relative; align-self: center; margin: 0 0 5px 20px;`;
const NoticeCount = styled.span`
  position: absolute;
  left: 6px;
  top: 7px;
  width: 18px;
  height: 18px;
  border: 1px solid #999;
  border-radius: 9px;
  background: #2b2b2b;
  font: 600 11px/16px ${ui};
  text-align: center;
`;
const PeekLine = styled.div`width: 5px; border-left: 1px solid #6c6c6c;`;

const Tasks = ({ cols, row }) => (
  <TaskGrid $cols={cols} $row={row}>
    {taskOrder.map(k => (
      <TaskSlot key={k} $active={k === 'brave'}>
        {k === 'explorer' || k === 'notepad' ? <TaskOpen>{taskIcons[k]}</TaskOpen> : taskIcons[k]}
      </TaskSlot>
    ))}
  </TaskGrid>
);

/* ------------------------------------------------------ mxtoolbox browser */

const WebRow = styled.div`flex: none; display: flex; height: 615px;`;
const WebView = styled.div`display: flex; flex-direction: column; width: 1343px; background: #fff; font-family: ${arial}; color: #333;`;
const PageScroll = styled.div`height: 581px; overflow: hidden;`;
const ToolBand = styled.div`display: flex; height: 20px; padding-left: 19px; background: #f4f4f4;`;
const InputEdge = styled.div`
  width: 350px;
  height: 5px;
  margin-right: 4px;
  border: 1px solid #5aa9ea;
  border-top: 0;
  border-radius: 0 0 4px 4px;
  background: #fff;
  box-shadow: 0 2px 8px rgba(102, 175, 233, .6);
`;
const OrangeEdge = styled.div`
  width: ${p => p.$w}px;
  height: 5px;
  border: 1px solid #a9601c;
  border-top: 0;
  border-left-width: ${p => p.$right ? 0 : 1}px;
  border-radius: ${p => p.$right ? '0 0 4px 0' : '0 0 0 4px'};
  background: #c6772c;
`;
const Result = styled.section`
  width: 1024px;
  height: 269px;
  margin: 25px 0 0 10px;
  padding: 0 20px;
  border: 1px solid #ddd;
  border-radius: 4px;
`;
const ResultHead = styled.div`
  display: flex;
  align-items: center;
  height: 65px;
  padding-top: 9px;
  border-bottom: 1px solid #eee;
`;
const ResultTitle = styled.h2`flex: none; margin: 0 0 1px; width: 557px; font: 700 18px/1 ${arial};`;
const MonitorBtn = styled.button`
  width: 103px;
  height: 34px;
  padding: 0;
  border: 1px solid #4cae4c;
  border-radius: 4px;
  background: #5cb85c;
  color: #fff;
  font: 14px/1 ${arial};
`;
const HttpsBtn = styled.button`
  display: flex;
  align-items: center;
  justify-content: center;
  gap: 4px;
  width: 58px;
  height: 24px;
  padding: 0;
  border: 1px solid #ccc;
  border-radius: 3px;
  background: #fff;
  color: #333;
  font: 13px/1 ${arial};
`;
const Grid = styled.div`
  display: grid;
  grid-template-columns: ${p => p.$cols};
  width: 981px;
  margin-top: ${p => p.$top}px;
  font-size: 13px;
`;
const Head = styled.div`
  height: ${p => p.$h}px;
  padding: 5px 5px 0;
  border-right: 1px solid #ddd;
  border-bottom: 2px solid #ddd;
  background: #ededed;
  font-weight: 700;
  line-height: 17px;
`;
const Cell = styled.div`
  height: 48px;
  padding: 4px 4px 0 5px;
  border-right: 1px solid #ddd;
  border-bottom: 1px solid #ddd;
  background: #f9f9f9;
  line-height: 19px;
`;
const IconCell = styled(Cell)`padding-top: 6px;`;
const Blue = styled.a`color: #337ab7;`;
const InlineIcon = styled.span`display: inline-block; vertical-align: -4px; margin-right: 4px;`;
const LinkBar = styled.div`
  display: grid;
  grid-template-columns: 287px 260px 217px 1fr;
  height: 18px;
  margin-top: 20px;
  padding-left: 5px;
  background: #ececec;
  font: 12px/16px ${arial};
`;
const Report = styled.div`display: flex; justify-content: space-between; font: 14px/20px ${arial}; white-space: pre;`;
const Black = styled.u`color: #000;`;
const About = styled.section`width: 1003px; margin: 48px 0 0 30px; font: 12px/18px ${arial}; color: #444; white-space: pre;`;
const AboutTitle = styled.h3`
  margin: 0 0 10px;
  height: 33px;
  border-bottom: 3px solid #ddd;
  color: #6b6656;
  font: 400 21px/28px ${arial};
`;
const Para = styled.p`margin: 0 0 18px;`;
const Commands = styled.div`
  display: grid;
  grid-template-columns: 79.5px 1fr;
  margin-top: 33px;
  font: 13px/18px ${arial};
  color: #333;
`;
const SiteFooter = styled.footer`
  display: flex;
  align-items: center;
  justify-content: space-between;
  height: 34px;
  padding: 0 24px 0 15px;
  background: #484741;
  color: #98968b;
  font: 9px/1 ${arial};
  white-space: pre;
`;
const FooterIcons = styled.div`display: flex; align-items: center; gap: 2px;`;

const MxBrowser = () => (
  <>
    <TabStrip $h={40}>
      <Spacer $w={4} />
      <Tab $w={236} $color="#8b8d90"><Globe /><TabTitle $fade $end={0} $tight={0.1}>dchaintestnet-2713017997578000-1.</TabTitle></Tab>
      <Spacer $w={2} />
      <Tab $w={235} $active $color="#43464a" $pad={13}>
        <Icon w={12} box={16}><circle cx="6.500" cy="6.500" r="6" fill="#666a6e" /><path d="M3 5q3 0 3.500 2T7 11M7 2.500q0 2 2.500 2" stroke="#eee" strokeWidth="1.3" /><path d="m10 12 4 3.500" stroke="#888" strokeWidth="2.5" /></Icon>
        <TabTitle $gap={9}>Network Tools: DNS,IP,Email</TabTitle><Close color="#3d3d3d" />
      </Tab>
      <StripSlot $w={44}><Plus color="#6f7276" /></StripSlot>
      <Grow />
      <WindowButtons color="#111" restore />
    </TabStrip>
    <Toolbar>
      <Spacer $w={19} /><Chevron dir="l" color="#69808a" />
      <Spacer $w={26} /><Chevron dir="r" color="#b9c2c7" />
      <Spacer $w={25} /><Close size={11} color="#5f6b73" sw={1} />
      <Spacer $w={140} /><Bookmark />
      <Spacer $w={17} />
      <UrlBox $w={790} $pad={10}>
        <Tune />
        <UrlText $size={13.22} $w={648} $before={15} $after={9}>mxtoolbox.com/SuperTool.aspx?action=https%3a%2f%2fdchaintestnet-2713017997578000-1.ws.testne...</UrlText>
        <Share /><UrlRule />
        <Badged $mr={16}><BraveMark /><Badge $right={-4} $bg="#5b6071">4</Badge></Badged>
        <Badged><Bat /><Badge $right={-6} $bg="#fb542b">1</Badge></Badged>
      </UrlBox>
      <Spacer $w={80} />
      <Extensions plain />
    </Toolbar>
    <Bookmarks count={10} gap={55} />
    <WebRow>
      <WebView>
        <PageScroll>
          <ToolBand><InputEdge /><OrangeEdge $w={122} /><OrangeEdge $w={33} $right /></ToolBand>
          <Result>
            <ResultHead>
              <ResultTitle>https:dchaintestnet-2713017997578000-1.ws.testnet.sagarpc.io/</ResultTitle>
              <MonitorBtn>Monitor This</MonitorBtn>
              <Grow />
              <HttpsBtn>
                <Icon w={12} box={13} stroke="#222" sw={1.9}><path d="M1 6a5.500 5.500 0 0 1 9.500-3M12 7a5.500 5.500 0 0 1-9.500 3" /><path d="M12.500 0v5h-5zM.5 13V8h5z" fill="#222" stroke="none" /></Icon>
                https
              </HttpsBtn>
            </ResultHead>
            <Grid $cols="222px 661px 98px" $top={15}>
              <Head $h={31} /><Head $h={31}>Certificate</Head><Head $h={31} />
            </Grid>
            <Grid $cols="29px 102px 765px 85px" $top={20}>
              <Head $h={30} /><Head $h={30}>Test</Head><Head $h={30}>Result</Head><Head $h={30} />
              <IconCell><Icon w={17} box={17}><circle cx="8.500" cy="8.500" r="8.500" fill="#d9534f" /><path d="m5.800 5.800 5.400 5.400M11.200 5.800l-5.400 5.400" stroke="#fff" strokeWidth="2.4" /></Icon></IconCell>
              <Cell>HTTP Connect</Cell>
              <Cell>The remote server returned an error: (502) Bad Gateway. (https://dchaintestnet-2713017997578000-1.ws.testnet.sagarpc.io/)</Cell>
              <Cell><Blue><InlineIcon><Icon w={17} box={17}><circle cx="8.500" cy="8.500" r="8.500" fill="#46b0d0" /><path d="M8.500 3.500v2.200M6.800 7.500h2V13M6.500 12.700h4" stroke="#fff" strokeWidth="1.9" /></Icon></InlineIcon>More Info</Blue></Cell>
            </Grid>
            <LinkBar><Blue>dns lookup</Blue><Blue>smtp diag</Blue><Blue>blacklist</Blue><Blue>http test</Blue></LinkBar>
            <Report>
              <span>Reported by <b>mxtoolbox.com</b> on 6/30/2024 at <b>5:08:45 PM</b>, <Black>just for you</Black>.</span>
              <Blue>Transcript</Blue>
            </Report>
          </Result>
          <About>
            <AboutTitle>ABOUT THE SUPERTOOL!</AboutTitle>
            <Para>All of your MX record, DNS, blacklist and SMTP diagnostics in one integrated tool.  Input a <b>domain name</b> or <b>IP Address</b> or <b>Host Name.</b> Links in the results will guide you to other relevant<br />tools and information.  And you'll have a chronological history of your results.</Para>
            <Para>If you already know exactly what you want, you can force a particular test or lookup.  Try some of these examples:</Para>
            <Para>(e.g. "blacklist: 127.0.0.2" will do a blacklist lookup)</Para>
            <Commands><b>Command</b><b>Explanation</b><span>blacklist:</span><span>Check IP or host for reputation</span></Commands>
          </About>
        </PageScroll>
        <SiteFooter>
          <span>Your IP is: |  <u>Contact</u> <u>Terms &amp; Conditions</u> <u>Site Map</u> <u>Security</u> <u>API</u> <u>Privacy</u> Phone: (866)-698-6652 |  © Copyright 2004-2021, <u>MXToolBox, Inc</u>, All rights reserved. US Patents 10839353 B2 &amp; 11461738 B2</span>
          <FooterIcons>
            <Icon w={13} h={11} box={13} boxH={11}><path d="M13 1.300 11.700 2.700C12 7.500 8 11 3.800 11 2.300 11 1 10.500 0 9.800c1.400.1 2.700-.3 3.700-1.100C2.500 8.600 1.600 7.900 1.300 6.900h1.100C1.200 6.600.4 5.500.4 4.300l1.100.3C.4 3.800.1 2.300.8 1.100 2.200 2.700 4.100 3.600 6.200 3.700 5.800 1.700 7.200 0 9 0c.8 0 1.500.3 2 .9L12.600.3l-1.100 1.400z" fill="#a9a79c" /></Icon>
            <Icon w={12} box={12}><rect width="12" height="12" rx="2.500" fill="#a9a79c" /><path d="M3.500 3.500h3a1 1 0 0 1 1 1.500q1 .3 1 1.500V8.500h-5z" stroke="#484741" strokeWidth="1.1" /></Icon>
          </FooterIcons>
        </SiteFooter>
      </WebView>
      <LightTrack $w={17} $pad={6}>
        <Icon w={8} h={5} box={8} boxH={5}><path d="M0 5h8L4 0z" fill="#555" /></Icon>
        <LightThumb $w={13} $h={259} $top={90} $bg="#c1c1c1" />
        <Grow />
        <Icon w={8} h={5} box={8} boxH={5}><path d="M0 0h8L4 5z" fill="#555" /></Icon>
      </LightTrack>
    </WebRow>
  </>
);

const rightTaskbarBg = 'linear-gradient(90deg, #1a1a3e 0, #1c1c38 90px, #2c2a30 200px, #303030 330px, #2d3b2d 430px, #2f402f 480px, #333 580px, #3e3e3e 720px, #3a3a3a 1100px, #1d1d1d 1240px, #1b1b1b 100%)';

export default function App() {
  return (
    <>
      <Global />
      <Desk>
        <Monitor $w={1280} $bg="#000">
          <BackArea>
            <BackBrowser />
            <DocsWindow />
            <ExplorerWindow />
          </BackArea>
          <Taskbar $h={81} $bg="#1d1d1d">
            <StartArea $w={97.5}><WinLogo /><TaskView /></StartArea>
            <Tasks cols={20} row={40.5} />
            <Spacer $w={11} />
            <Tray>
              <Icon w={12} h={7} box={12} boxH={7} stroke="#fff" sw={1.2}><path d="M.5 6.500 6 1l5.500 5.500" /></Icon>
              <TrayGrid>
                <Icon w={12} h={16} box={12} boxH={16} stroke="#fff" sw={1.1}><path d="M2.500 2.500q3-2.500 6 0M2.500 13.500q3 2.500 6 0M1 5h7v6H1zM8 8l3-2v4.500z" /></Icon>
                <Icon w={12} box={12} stroke="#fff" sw={1}><path d="M.5 12A11.500 11.500 0 0 1 12 .5M3.500 12A8.500 8.500 0 0 1 12 3.500M6.500 12A5.500 5.500 0 0 1 12 6.500" /><circle cx="10.800" cy="10.800" r="1.2" fill="#fff" /></Icon>
                <Icon w={16} h={13} box={16} boxH={13} stroke="#fff" sw={1.1}><path d="M.5 4.500h2L6 1.500v10l-3.500-3h-2zM8 4.500q1.300 2 0 4M10 3q2.500 3.500 0 7" /><path d="M12.500 1q4 5.500 0 11" stroke="#777" /></Icon>
              </TrayGrid>
            </Tray>
            <Clock $w={56} $gap={11}><span>6:08 PM</span><span>Sunday</span><span>6/30/2024</span></Clock>
            <Notice>
              <Icon w={16} box={16}><path d="M0 0h16v13h-6l-3 3v-3H0z" fill="#fff" /><path d="M3 3.500h10M3 6.500h10M3 9.500h6" stroke="#1d1d1d" /></Icon>
              <NoticeCount>31</NoticeCount>
            </Notice>
            <Grow />
            <PeekLine />
          </Taskbar>
        </Monitor>
        <Monitor $w={1360} $bg="#fff">
          <MxBrowser />
          <Taskbar $h={40} $bg={rightTaskbarBg}>
            <StartArea $w={98.5}><WinLogo /><TaskView /></StartArea>
            <Tasks cols={21} row={40} />
            <Grow />
            <Clock $w={63} $gap={7}><span>6:08 PM</span><span>6/30/2024</span></Clock>
          </Taskbar>
        </Monitor>
      </Desk>
    </>
  );
}
